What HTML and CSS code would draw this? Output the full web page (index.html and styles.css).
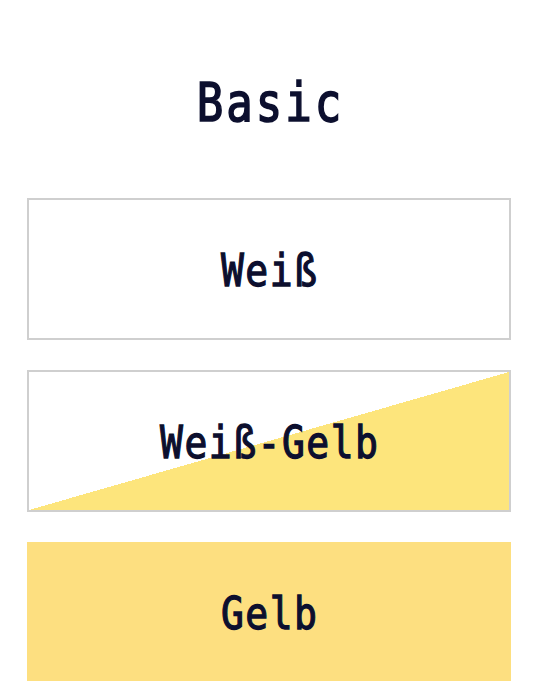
FILE: index.html
```html
<!DOCTYPE html>
<html lang="de">
<head>
  <meta charset="UTF-8">
  <meta name="viewport" content="width=device-width, initial-scale=1.0">
  <title>Basic</title>
  <link rel="stylesheet" href="styles.css">
</head>
<body>

<div class="container">
  <h1 class="title"><span class="label">Basic</span></h1>

  <div class="options">
    <div class="option white"><span class="label">Weiß</span></div>
    <div class="option split"><span class="label">Weiß-Gelb</span></div>
    <div class="option yellow"><span class="label">Gelb</span></div>
  </div>
</div>

</body>
</html>
```

FILE: styles.css
```css
body {
  margin: 0;
  padding: 0;
  background-color: #fff;
  font-family: "DejaVu Sans Mono", monospace;
  color: #0c0f2e;
}
.container {
  padding: 0 29px 0 27px;
}
.title {
  margin: 0;
  padding: 75px 0 67px;
  text-align: center;
  font-size: 44px;
  font-weight: normal;
  line-height: 56px;
}
.title .label {
  letter-spacing: 3px;
  padding-left: 3px;
  -webkit-text-stroke: 1.4px #0c0f2e;
  transform: scaleY(1.2);
}
.options {
  display: flex;
  flex-direction: column;
  gap: 30px;
}
.option {
  height: 142px;
  box-sizing: border-box;
  display: flex;
  align-items: center;
  justify-content: center;
  font-size: 38px;
  padding-top: 4px;
}
.label {
  display: inline-block;
  letter-spacing: 1.5px;
  padding-left: 1.5px;
  -webkit-text-stroke: 1.1px #0c0f2e;
  transform: scaleY(1.15);
}
.white {
  border: 2px solid #cfcfcf;
  background-color: #fff;
}
.split {
  border: 2px solid #cfcfcf;
  background: linear-gradient(to bottom right, #fff 50%, #fde57c 50%);
}
.yellow {
  background-color: #fddf80;
  height: 139px;
}
```
